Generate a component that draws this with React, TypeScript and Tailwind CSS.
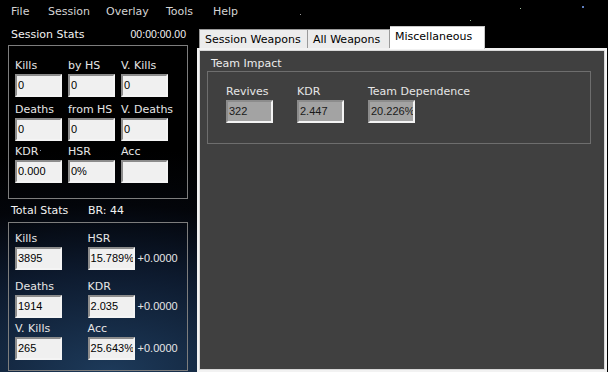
import React from "react";

const font = { fontFamily: '"DejaVu Sans", "Liberation Sans", sans-serif' };

function Field({ value, w = "w-[47px]", dark = false }: { value: string; w?: string; dark?: boolean }) {
  return (
    <div
      className={`${w} h-[23px] border-2 border-t-[#8c8c8c] border-l-[#8c8c8c] border-r-[#f4f4f4] border-b-[#f4f4f4] ${
        dark ? "bg-[#a3a3a3] text-[#1a1a1a]" : "bg-[#f0f0f0] text-black"
      } pl-[1px] font-['Liberation_Sans',sans-serif] text-[11px] leading-[19px] whitespace-nowrap overflow-hidden`}
    >
      {value}
    </div>
  );
}

function Cell({ label, value, extra, w }: { label: string; value: string; extra?: string; w?: string }) {
  return (
    <div className={`flex flex-col ${w ?? "w-[53px]"}`}>
      <div className="h-[14px] leading-[16px] mb-[2px] text-[11px] text-[#e6e6e6] whitespace-nowrap">{label}</div>
      <div className="flex items-center">
        <Field value={value} />
        {extra && (
          <span className="ml-[3px] font-['Liberation_Sans',sans-serif] text-[11px] text-[#e6e6e6]">{extra}</span>
        )}
      </div>
    </div>
  );
}

export default function App() {
  return (
    <div
      style={font}
      className="relative w-[608px] h-[372px] overflow-hidden bg-[radial-gradient(ellipse_70%_60%_at_18%_100%,#1d3a5a_0%,#0d1a2e_45%,#03050a_75%,#000000_100%)] text-[11px] select-none"
    >
      {/* stars */}
      <div className="absolute left-[130px] top-[265px] w-[2px] h-[2px] bg-[#9cc8ff] rounded-full" />
      <div className="absolute left-[582px] top-[6px] w-[2px] h-[2px] bg-[#7fa8ff] rounded-full" />
      <div className="absolute left-[300px] top-[14px] w-[1px] h-[1px] bg-[#9a9a9a]" />
      <div className="absolute left-[470px] top-[20px] w-[1px] h-[1px] bg-[#8fb08f]" />
      <div className="absolute left-[520px] top-[8px] w-[1px] h-[1px] bg-[#a0c0a0]" />
      <div className="absolute left-[60px] top-[300px] w-[1px] h-[1px] bg-[#a0b8d8]" />
      <div className="absolute left-[40px] top-[150px] w-[1px] h-[1px] bg-[#8090a8]" />

      {/* menu bar */}
      <div className="relative flex items-center h-[23px] pl-[11px] pt-[1px] text-[11px] text-[#d4d4d4]">
        <span className="w-[37px]">File</span>
        <span className="w-[58px]">Session</span>
        <span className="w-[60px]">Overlay</span>
        <span className="w-[47px]">Tools</span>
        <span>Help</span>
      </div>

      <div className="relative flex">
        {/* left column */}
        <div className="w-[190px] pl-[8px] flex flex-col">
          <div className="h-[22px] flex items-center justify-between pl-[3px] pr-[4px] pt-[2px] text-[#f2f2f2]">
            <span>Session Stats</span>
            <span className="font-['Liberation_Sans',sans-serif] text-[10.5px]">00:00:00.00</span>
          </div>
          <div className="w-[180px] h-[154px] border border-[#7d7d7d] pl-[6px] pt-[12px] flex flex-col">
            <div className="flex">
              <Cell label="Kills" value="0" />
              <Cell label="by HS" value="0" />
              <Cell label="V. Kills" value="0" />
            </div>
            <div className="flex mt-[5px]">
              <Cell label="Deaths" value="0" />
              <Cell label="from HS" value="0" />
              <Cell label="V. Deaths" value="0" />
            </div>
            <div className="flex mt-[3px]">
              <Cell label="KDR" value="0.000" />
              <Cell label="HSR" value="0%" />
              <Cell label="Acc" value="" />
            </div>
          </div>

          <div className="h-[23px] flex items-center pl-[3px] pt-[1px] text-[#f2f2f2]">
            <span className="w-[77px]">Total Stats</span>
            <span>BR: 44</span>
          </div>
          <div className="w-[180px] h-[149px] border border-[#7d7d7d] pl-[6px] pt-[8px] flex flex-col">
            <div className="flex">
              <Cell label="Kills" value="3895" w="w-[73px]" />
              <Cell label="HSR" value="15.789%" extra="+0.0000" w="w-[100px]" />
            </div>
            <div className="flex mt-[9px]">
              <Cell label="Deaths" value="1914" w="w-[73px]" />
              <Cell label="KDR" value="2.035" extra="+0.0000" w="w-[100px]" />
            </div>
            <div className="flex mt-[3px]">
              <Cell label="V. Kills" value="265" w="w-[73px]" />
              <Cell label="Acc" value="25.643%" extra="+0.0000" w="w-[100px]" />
            </div>
          </div>
        </div>

        {/* right column */}
        <div className="flex flex-col pl-[7px] pt-[3px]">
          <div className="relative flex items-end h-[22px] pl-[2px] z-10">
            <div className="h-[19px] w-[109px] border border-[#9a9a9a] border-b-0 bg-[#ececec] text-black pl-[5px] leading-[19px]">
              Session Weapons
            </div>
            <div className="h-[19px] w-[82px] border border-l-0 border-[#9a9a9a] border-b-0 bg-[#ececec] text-black pl-[5px] leading-[19px]">
              All Weapons
            </div>
            <div className="h-[23px] w-[95px] -mb-[1px] border border-l-0 border-[#c8c8c8] border-b-0 bg-white text-black pl-[5px] leading-[20px]">
              Miscellaneous
            </div>
          </div>
          <div className="w-[410px] h-[324px] border border-[#f2f2f2] bg-[#f2f2f2] p-[1px]">
            <div className="w-full h-full bg-[#404040] border border-[#d8d8d8] pt-[4px] pl-[7px] pr-[13px]">
              <div className="h-[16px] leading-[17px] text-[#ececec] pl-[4px]">Team Impact</div>
              <div className="h-[73px] border border-[#6e6e6e] pl-[18px] pt-[12px] flex">
                <div className="flex flex-col w-[71px]">
                  <div className="h-[14px] leading-[16px] mb-[2px] text-[#e6e6e6]">Revives</div>
                  <Field value="322" dark />
                </div>
                <div className="flex flex-col w-[71px]">
                  <div className="h-[14px] leading-[16px] mb-[2px] text-[#e6e6e6]">KDR</div>
                  <Field value="2.447" dark />
                </div>
                <div className="flex flex-col">
                  <div className="h-[14px] leading-[16px] mb-[2px] text-[#e6e6e6]">Team Dependence</div>
                  <Field value="20.226%" dark />
                </div>
              </div>
            </div>
          </div>
        </div>
      </div>
    </div>
  );
}
